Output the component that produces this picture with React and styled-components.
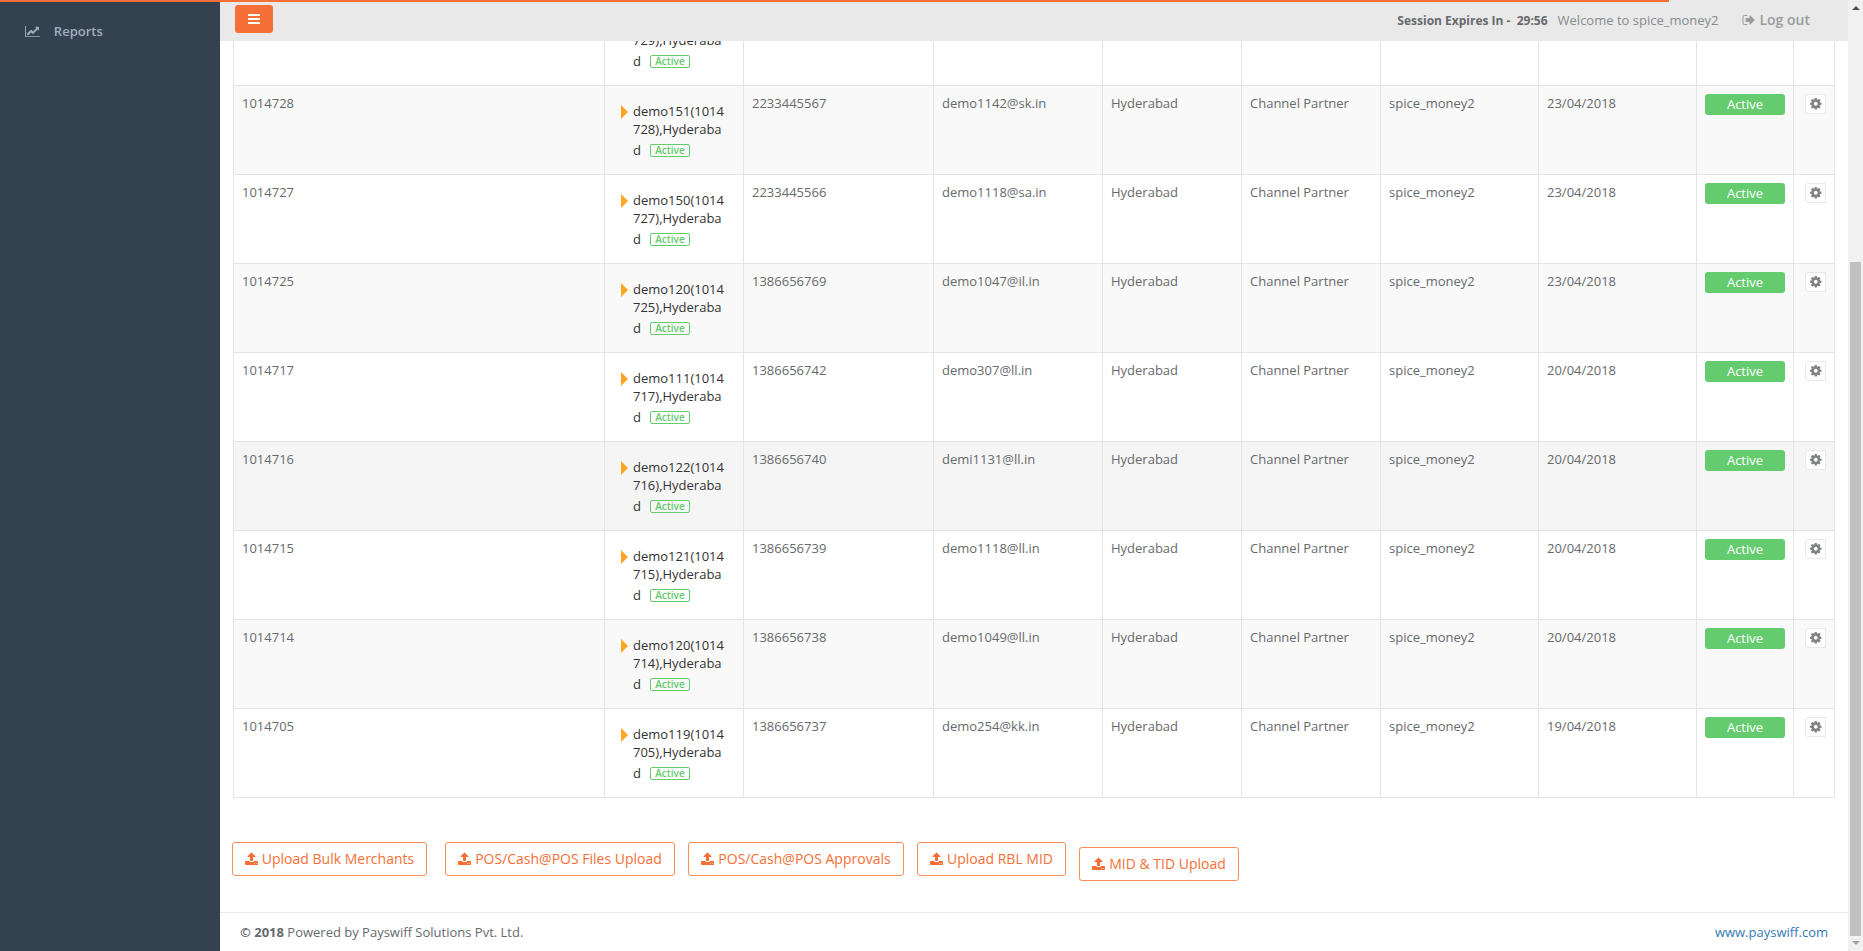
import React from "react";
import styled, { createGlobalStyle } from "styled-components";

const GlobalStyle = createGlobalStyle`
  *, *::before, *::after { box-sizing: border-box; }
  body {
    margin: 0;
    font: 13px/1.42857 "Open Sans", "Noto Sans", sans-serif;
    color: #676a6c;
    background: #fff;
    overflow: hidden;
  }
`;

const Page = styled.div`
  display: flex;
  height: 951px;
  position: relative;
`;
const LoadingBar = styled.div`
  position: absolute;
  top: 0;
  left: 0;
  z-index: 2;
  width: 1669px;
  height: 2px;
  background: #f56f37;
`;
const Sidebar = styled.nav`
  width: 220px;
  flex: none;
  padding: 22px 0 0 25px;
  background: #34414f;
`;
const NavLink = styled.a`
  display: flex;
  align-items: center;
  gap: 14px;
  color: #a3adc0;
  font-weight: 600;
  line-height: 19px;
`;
const Main = styled.main`
  flex: 1;
  min-width: 0;
  display: flex;
  flex-direction: column;
`;
const TopBar = styled.header`
  flex: none;
  height: 41px;
  padding: 0 38px 0 15px;
  display: flex;
  align-items: center;
  background: #e9e9e9;
  border-bottom: 1px solid #e7eaec;
`;
const MenuButton = styled.button`
  width: 38px;
  height: 28px;
  margin: 0 auto 2px 0;
  padding: 0;
  display: flex;
  align-items: center;
  justify-content: center;
  border: 0;
  border-radius: 3px;
  background: #f56f37;
  color: #fff;
`;
const Session = styled.strong`
  margin: 1px 10px 0 0;
  font-size: 12px;
  white-space: pre;
`;
const Welcome = styled.span`
  color: #888b8d;
  margin-right: 24px;
`;
const Logout = styled.a`
  display: flex;
  align-items: center;
  gap: 4px;
  color: #999c9e;
  font-weight: 600;
  font-size: 14px;
`;
const TableClip = styled.section`
  flex: none;
  height: 757px;
  margin: 0 13px;
  overflow: hidden;
  display: flex;
  flex-direction: column;
  justify-content: flex-end;
`;
const Row = styled.div`
  flex: none;
  height: 89px;
  display: grid;
  grid-template-columns: 371px 139px 190px 169px 139px 139px 158px 158px 97px 42px;
  border-bottom: 1px solid #e4e4e6;
  background: ${(p) => ({ odd: "#f9f9f9", hover: "#f5f5f5" })[p.$tone] || "#fff"};
`;
const Cell = styled.div`
  padding: 8px;
  border-left: 1px solid #e4e4e6;
  &:last-child { border-right: 1px solid #e4e4e6; padding-left: 11px; }
`;
const TreeItem = styled.div`
  display: flex;
  padding: 8px 0 0 8px;
  gap: 5px;
  color: #333;
`;
const Caret = styled.i`
  flex: none;
  width: 7px;
  height: 14px;
  margin-top: 3px;
  border: solid transparent;
  border-width: 7px 0 7px 7px;
  border-left-color: #ffa423;
`;
const Label = styled.div`
  line-height: 18px;
`;
const LastLine = styled.div`
  display: flex;
  align-items: center;
  gap: 9px;
  height: 23px;
`;
const Badge = styled.span`
  width: 40px;
  height: 13px;
  margin-top: 2px;
  border: 1px solid #64cc6f;
  border-radius: 2px;
  color: #64cc6f;
  font-size: 10px;
  font-weight: 600;
  line-height: 11px;
  text-align: center;
`;
const Status = styled.div`
  height: 21px;
  border-radius: 3px;
  background: #64cc6f;
  color: #fff;
  line-height: 21px;
  text-align: center;
`;
const GearButton = styled.button`
  width: 21px;
  height: 20px;
  padding: 0 0 1px;
  display: flex;
  align-items: center;
  justify-content: center;
  border: 1px solid #e7eaec;
  border-radius: 3px 0 0 3px;
  background: #fff;
  color: #808284;
`;
const Actions = styled.div`
  flex: 1;
  padding: 44px 0 0 12px;
  display: flex;
  align-items: flex-start;
`;
const UploadButton = styled.button`
  width: ${(p) => p.$width}px;
  height: 34px;
  margin: ${(p) => p.$drop || 0}px ${(p) => p.$gap || 0}px 0 0;
  padding: 0;
  display: flex;
  align-items: center;
  justify-content: center;
  gap: 4px;
  border: 1px solid #f88f59;
  border-radius: 3px;
  background: #fff;
  color: #f56f37;
  font: 14px/20px "Open Sans", "Noto Sans", sans-serif;
  white-space: nowrap;
`;
const Footer = styled.footer`
  flex: none;
  height: 39px;
  padding: 10px 20px;
  display: flex;
  justify-content: space-between;
  border-top: 1px solid #e7eaec;
`;
const SiteLink = styled.a`
  color: #337ab7;
`;
const ScrollTrack = styled.div`
  width: 15px;
  flex: none;
  display: flex;
  flex-direction: column;
  align-items: center;
  padding: 6px 0;
  background: #f1f1f1;
`;
const ScrollArrow = styled.i`
  border: solid transparent;
  border-width: ${(p) => (p.$down ? "4px 4px 0" : "0 4px 4px")};
  border-top-color: ${(p) => (p.$down ? "#a3a3a3" : "transparent")};
  border-bottom-color: ${(p) => (p.$down ? "transparent" : "#505050")};
`;
const ScrollThumb = styled.div`
  width: 11px;
  height: 674px;
  margin: 252px 0 5px;
  background: #c1c1c1;
`;

const PATHS = {
  bars: "M1664 1344v128q0 26-19 45t-45 19h-1408q-26 0-45-19t-19-45v-128q0-26 19-45t45-19h1408q26 0 45 19t19 45zm0-512v128q0 26-19 45t-45 19h-1408q-26 0-45-19t-19-45v-128q0-26 19-45t45-19h1408q26 0 45 19t19 45zm0-512v128q0 26-19 45t-45 19h-1408q-26 0-45-19t-19-45v-128q0-26 19-45t45-19h1408q26 0 45 19t19 45z",
  cog: "M1152 896q0-106-75-181t-181-75-181 75-75 181 75 181 181 75 181-75 75-181zm512-109v222q0 12-8 23t-20 13l-185 28q-19 54-39 91 35 50 107 138 10 12 10 25t-9 23q-27 37-99 108t-94 71q-12 0-26-9l-138-108q-44 23-91 38-16 136-29 186-7 28-36 28h-222q-14 0-24.5-8.5t-11.5-21.5l-28-184q-49-16-90-37l-141 107q-10 9-25 9-14 0-25-11-126-114-165-168-7-10-7-23 0-12 8-23 15-21 51-66.5t54-70.5q-27-50-41-99l-183-27q-13-2-21-12.5t-8-23.5v-222q0-12 8-23t19-13l186-28q14-46 39-92-40-57-107-138-10-12-10-24 0-10 9-23 26-36 98.5-107.5t94.5-71.5q13 0 26 10l138 107q44-23 91-38 16-136 29-186 7-28 36-28h222q14 0 24.5 8.5t11.5 21.5l28 184q49 16 90 37l142-107q9-9 24-9 13 0 25 10 129 119 165 170 7 8 7 22 0 12-8 23-15 21-51 66.5t-54 70.5q26 50 41 98l183 28q13 2 21 12.5t8 23.5z",
  upload: "M1344 1472q0-26-19-45t-45-19-45 19-19 45 19 45 45 19 45-19 19-45zm256 0q0-26-19-45t-45-19-45 19-19 45 19 45 45 19 45-19 19-45zm128-224v320q0 40-28 68t-68 28h-1472q-40 0-68-28t-28-68v-320q0-40 28-68t68-28h427q21 56 70.5 92t110.5 36h256q61 0 110.5-36t70.5-92h427q40 0 68 28t28 68zm-325-648q-17 40-59 40h-256v448q0 26-19 45t-45 19h-256q-26 0-45-19t-19-45v-448h-256q-42 0-59-40-17-39 14-69l448-448q18-19 45-19t45 19l448 448q31 30 14 69z",
  signOut: "M704 1440q0 4 1 20t.5 26.5-3 23.5-10 19.5-20.5 6.5h-320q-119 0-203.5-84.5t-84.5-203.5v-704q0-119 84.5-203.5t203.5-84.5h320q13 0 22.5 9.5t9.5 22.5q0 4 1 20t.5 26.5-3 23.5-10 19.5-20.5 6.5h-320q-66 0-113 47t-47 113v704q0 66 47 113t113 47h312l11.5 1 11.5 3 8 5.5 7 9 2 13.5zm928-544q0 26-19 45l-544 544q-19 19-45 19t-45-19-19-45v-288h-448q-26 0-45-19t-19-45v-384q0-26 19-45t45-19h448v-288q0-26 19-45t45-19 45 19l544 544q19 19 19 45z",
  chart: "M2048 1536v128h-2048v-1536h128v1408h1920zm-128-1248v435q0 21-19.5 29.5t-35.5-7.5l-121-121-633 633q-10 10-23 10t-23-10l-233-233-416 416-192-192 585-585q10-10 23-10t23 10l233 233 464-464-121-121q-16-16-7.5-35.5t29.5-19.5h435q14 0 23 9t9 23z",
};

function Icon({ name, size, box = 1792, left = 0 }) {
  return (
    <svg
      width={(size * box) / 1792}
      height={size}
      viewBox={`${left} 0 ${box} 1792`}
      fill="currentColor"
      aria-hidden="true"
    >
      <path d={PATHS[name]} />
    </svg>
  );
}

const rows = [
  ["1014729", "demo152", "2233445568", "demo1143@sk.in", "23/04/2018"],
  ["1014728", "demo151", "2233445567", "demo1142@sk.in", "23/04/2018", "odd"],
  ["1014727", "demo150", "2233445566", "demo1118@sa.in", "23/04/2018"],
  ["1014725", "demo120", "1386656769", "demo1047@il.in", "23/04/2018", "odd"],
  ["1014717", "demo111", "1386656742", "demo307@ll.in", "20/04/2018"],
  ["1014716", "demo122", "1386656740", "demi1131@ll.in", "20/04/2018", "hover"],
  ["1014715", "demo121", "1386656739", "demo1118@ll.in", "20/04/2018"],
  ["1014714", "demo120", "1386656738", "demo1049@ll.in", "20/04/2018", "odd"],
  ["1014705", "demo119", "1386656737", "demo254@kk.in", "19/04/2018"],
];

const uploads = [
  { text: "Upload Bulk Merchants", width: 195, gap: 18 },
  { text: "POS/Cash@POS Files Upload", width: 230, gap: 13 },
  { text: "POS/Cash@POS Approvals", width: 216, gap: 13 },
  { text: "Upload RBL MID", width: 149, gap: 13 },
  { text: "MID & TID Upload", width: 160, drop: 5 },
];

function MerchantRow({ data: [id, name, phone, email, date, tone] }) {
  return (
    <Row $tone={tone}>
      <Cell>{id}</Cell>
      <Cell>
        <TreeItem>
          <Caret />
          <Label>
            <div>{`${name}(${id.slice(0, 4)}`}</div>
            <div>{`${id.slice(4)}),Hyderaba`}</div>
            <LastLine>
              d<Badge>Active</Badge>
            </LastLine>
          </Label>
        </TreeItem>
      </Cell>
      <Cell>{phone}</Cell>
      <Cell>{email}</Cell>
      <Cell>Hyderabad</Cell>
      <Cell>Channel Partner</Cell>
      <Cell>spice_money2</Cell>
      <Cell>{date}</Cell>
      <Cell>
        <Status>Active</Status>
      </Cell>
      <Cell>
        <GearButton>
          <Icon name="cog" size={13.5} />
        </GearButton>
      </Cell>
    </Row>
  );
}

export default function App() {
  return (
    <Page>
      <GlobalStyle />
      <LoadingBar />
      <Sidebar>
        <NavLink>
          <Icon name="chart" size={13} box={2048} />
          Reports
        </NavLink>
      </Sidebar>
      <Main>
        <TopBar>
          <MenuButton>
            <Icon name="bars" size={14} />
          </MenuButton>
          <Session>{"Session Expires In -  29:56"}</Session>
          <Welcome>Welcome to spice_money2</Welcome>
          <Logout>
            <Icon name="signOut" size={14} box={1664} />
            Log out
          </Logout>
        </TopBar>
        <TableClip>
          {rows.map((row) => (
            <MerchantRow key={row[0]} data={row} />
          ))}
        </TableClip>
        <Actions>
          {uploads.map((u) => (
            <UploadButton key={u.text} $width={u.width} $gap={u.gap} $drop={u.drop}>
              <Icon name="upload" size={14} box={1664} left={64} />
              {u.text}
            </UploadButton>
          ))}
        </Actions>
        <Footer>
          <div>
            <strong>© 2018</strong> Powered by Payswiff Solutions Pvt. Ltd.
          </div>
          <SiteLink>www.payswiff.com</SiteLink>
        </Footer>
      </Main>
      <ScrollTrack>
        <ScrollArrow />
        <ScrollThumb />
        <ScrollArrow $down />
      </ScrollTrack>
    </Page>
  );
}
